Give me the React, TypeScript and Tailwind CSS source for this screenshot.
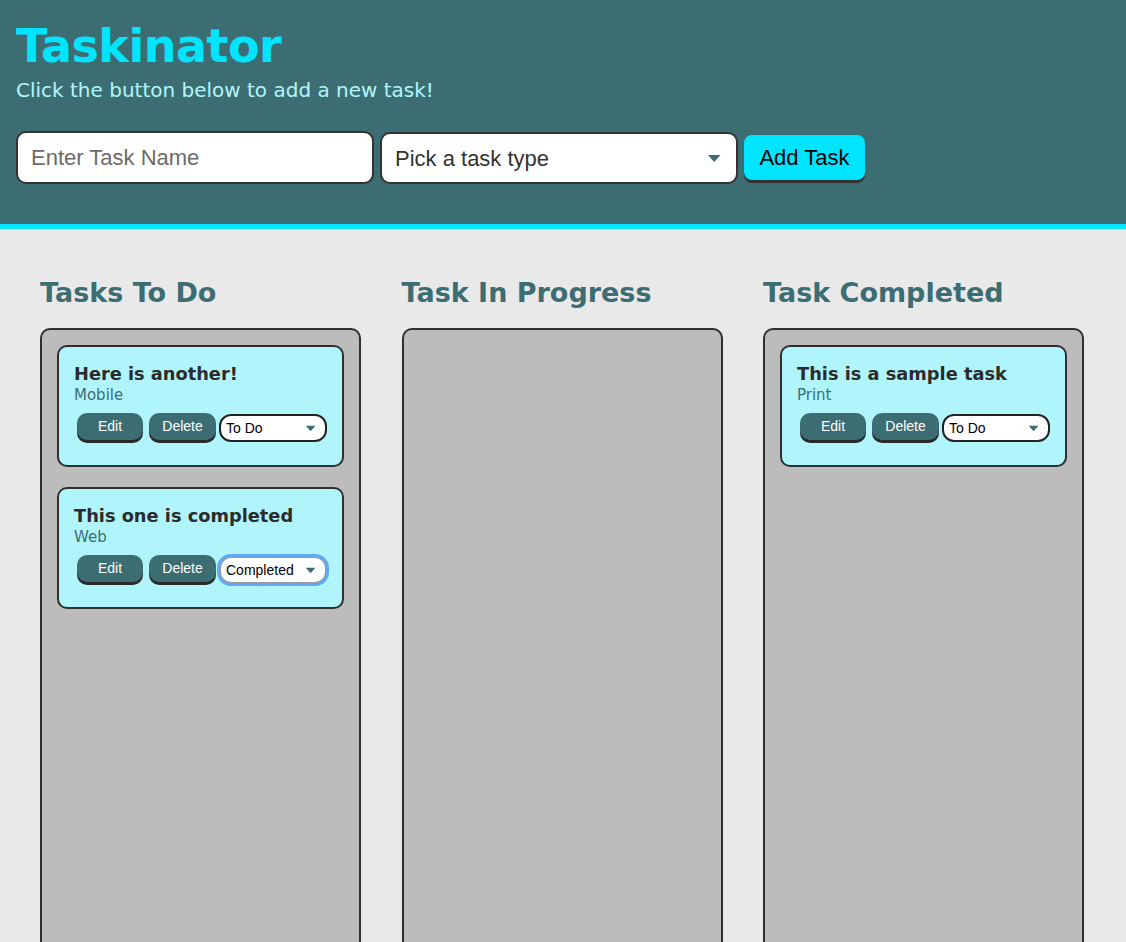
import React from "react";

const TEAL = "#3c6d73";

function Arrow({ size = 8 }: { size?: number }) {
  return (
    <svg width={size * 1.6} height={size} viewBox="0 0 16 10" className="shrink-0">
      <path d="M1 1 L15 1 L8 9 Z" fill={TEAL} />
    </svg>
  );
}

function TaskCard({ name, type, status, focused }: { name: string; type: string; status: string; focused?: boolean }) {
  return (
    <div className="rounded-[10px] border-2 border-[#2f2f2f] bg-[#b0f5fb] pl-[15px] pr-[15px] pt-[16px] pb-[23px]">
      <h3 className="text-[17.8px] leading-[22px] font-bold text-[#2b2b2b]" style={{ fontFamily: '"DejaVu Sans", Verdana, sans-serif' }}>
        {name}
      </h3>
      <p className="text-[15px] leading-[20px] text-[#3c6d73]" style={{ fontFamily: '"DejaVu Sans", Verdana, sans-serif' }}>
        {type}
      </p>
      <div className="mt-[8px] flex items-start pl-[3px]" style={{ fontFamily: '"Liberation Sans", Arial, sans-serif' }}>
        <button className="h-[27px] w-[66px] rounded-[10px] bg-[#3c6d73] text-[14px] text-white shadow-[0_3px_0_#2a2a2a]">Edit</button>
        <button className="ml-[6px] h-[27px] w-[67px] rounded-[10px] bg-[#3c6d73] text-[14px] text-white shadow-[0_3px_0_#2a2a2a]">Delete</button>
        <div
          className={
            focused
              ? "ml-[3px] mt-[1px] flex h-[28px] w-[108px] items-center justify-between rounded-[12px] border-2 border-[#9a9a9a] bg-white pl-[5px] pr-[9px] text-[14px] text-black outline outline-[3px] outline-[#62a9f3] outline-offset-[-1px]"
              : "ml-[3px] mt-[1px] flex h-[28px] w-[108px] items-center justify-between rounded-[12px] border-2 border-[#222] bg-white pl-[5px] pr-[9px] text-[14px] text-black"
          }
        >
          <span>{status}</span>
          <Arrow size={7} />
        </div>
      </div>
    </div>
  );
}

function Column({ title, children }: { title: string; children?: React.ReactNode }) {
  return (
    <div className="flex flex-col">
      <h2
        className="text-[27px] leading-[30px] font-bold text-[#3c6d73]"
        style={{ fontFamily: '"DejaVu Sans", Verdana, sans-serif' }}
      >
        {title}
      </h2>
      <div className="mt-[20px] flex min-h-[680px] flex-col gap-[20px] rounded-[10px] border-2 border-[#2f2f2f] bg-[#bcbcbc] p-[15px]">
        {children}
      </div>
    </div>
  );
}

export default function App() {
  return (
    <div className="min-h-screen bg-[#e9e9e9]" style={{ fontFamily: '"DejaVu Sans", Verdana, sans-serif' }}>
      <header className="h-[229px] border-b-[5px] border-[#00e5ff] bg-[#3c6d73] pl-[16px] pt-[18px]">
        <h1 className="text-[46px] leading-[56px] font-bold tracking-[-0.5px] text-[#00e5ff]">Taskinator</h1>
        <p className="mt-[4px] text-[20px] leading-[24px] text-[#b2f6fb]">Click the button below to add a new task!</p>
        <div className="mt-[29px] flex items-start" style={{ fontFamily: '"Liberation Sans", Arial, sans-serif' }}>
          <div className="flex h-[53px] w-[358px] items-center rounded-[10px] border-2 border-[#333] bg-white pl-[13px] text-[22px] text-[#6b6b6b]">
            Enter Task Name
          </div>
          <div className="ml-[6px] mt-[1px] flex h-[52px] w-[358px] items-center justify-between rounded-[10px] border-2 border-[#333] bg-white pl-[13px] pr-[15px] text-[22px] text-[#333]">
            <span>Pick a task type</span>
            <Arrow size={9} />
          </div>
          <button className="ml-[6px] mt-[4px] h-[45px] w-[121px] rounded-[8px] bg-[#00e5ff] text-[22px] text-black shadow-[0_3px_0_#333]">
            Add Task
          </button>
        </div>
      </header>
      <main className="grid grid-cols-[321px_321px_321px] gap-x-[40.5px] px-[40px] pt-[49px]">
        <Column title="Tasks To Do">
          <TaskCard name="Here is another!" type="Mobile" status="To Do" />
          <TaskCard name="This one is completed" type="Web" status="Completed" focused />
        </Column>
        <Column title="Task In Progress" />
        <Column title="Task Completed">
          <TaskCard name="This is a sample task" type="Print" status="To Do" />
        </Column>
      </main>
    </div>
  );
}
